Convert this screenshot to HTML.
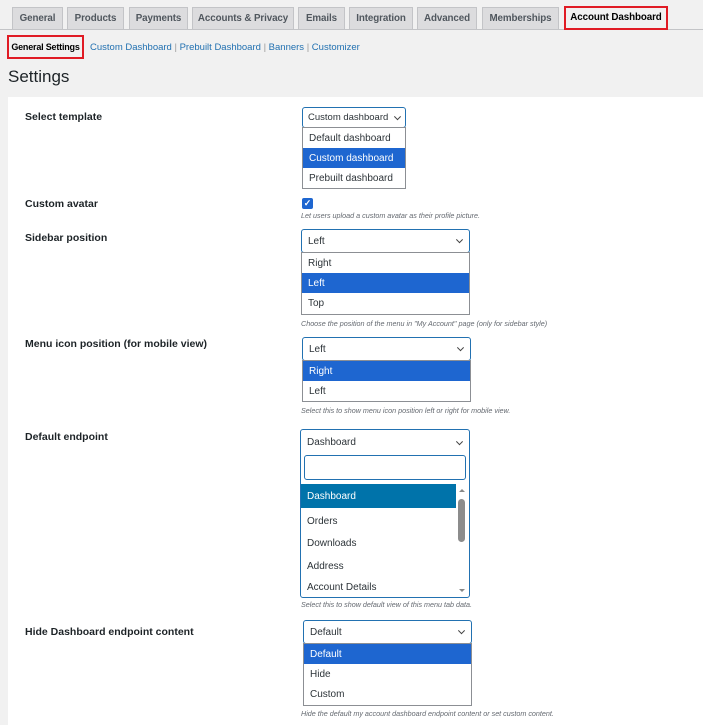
<!DOCTYPE html>
<html><head><style>
body{margin:0;width:703px;height:725px;background:#f1f1f1;font-family:"Liberation Sans",Arial,sans-serif;position:relative;overflow:hidden;color:#1d2327}
.a{position:absolute}
.tab{position:absolute;top:7px;height:22px;background:#dcdcde;border:1px solid #c3c4c7;border-bottom:none;font-size:9.8px;font-weight:bold;color:#50575e;text-align:center;line-height:22px;box-sizing:border-box;white-space:nowrap;letter-spacing:-0.1px}
.lbl{position:absolute;left:25px;font-size:10.5px;font-weight:bold;color:#1d2327}
.sel{position:absolute;background:#fff;border:1px solid #2271b1;border-radius:3px;box-sizing:border-box;font-size:10px;color:#2c3338;padding-left:6px}
.list{position:absolute;background:#fff;border:1px solid #8c8f94;box-sizing:border-box;font-size:10px;color:#2c3338}
.list div{height:20px;line-height:21px;padding-left:6px}
.list .on{background:#1e66d0;color:#fff}
.desc{position:absolute;left:301px;font-size:7.2px;font-style:italic;color:#646970;white-space:nowrap}
.chev{position:absolute;right:7px;top:50%;width:4px;height:4px;border-right:1.3px solid #444;border-bottom:1.3px solid #444;transform:translateY(-75%) rotate(45deg)}
</style></head><body>
<div class="a" style="left:0;top:29px;width:703px;height:1px;background:#c3c4c7"></div>
<div class="tab" style="left:12px;width:51px">General</div>
<div class="tab" style="left:67px;width:57px">Products</div>
<div class="tab" style="left:129px;width:59px">Payments</div>
<div class="tab" style="left:192px;width:102px">Accounts &amp; Privacy</div>
<div class="tab" style="left:298px;width:47px">Emails</div>
<div class="tab" style="left:349px;width:64px">Integration</div>
<div class="tab" style="left:417px;width:60px">Advanced</div>
<div class="tab" style="left:482px;width:77px">Memberships</div>
<div class="tab" style="left:564px;top:6px;height:24px;width:104px;background:#f1f1f1;color:#000;border:2px solid #e01b24;line-height:20px">Account Dashboard</div>
<div class="a" style="left:7px;top:35px;width:77px;height:24px;border:2px solid #e01b24;box-sizing:border-box;font-size:9px;font-weight:bold;line-height:20px;text-align:center;color:#000;white-space:nowrap;letter-spacing:-0.2px">General Settings</div>
<div class="a" style="left:90px;top:42px;font-size:9.5px;color:#2271b1">Custom Dashboard <span style="color:#999">|</span> Prebuilt Dashboard <span style="color:#999">|</span> Banners <span style="color:#999">|</span> Customizer</div>
<div class="a" style="left:8px;top:67px;font-size:17px;color:#1d2327">Settings</div>
<div class="a" style="left:8px;top:97px;width:695px;height:628px;background:#fff"></div>

<div class="lbl" style="top:111px">Select template</div>
<div class="sel" style="left:302px;top:107px;width:104px;height:21px;line-height:20px;white-space:nowrap;font-size:9.5px;padding-left:5px">Custom dashboard<span class="chev" style="right:5px"></span></div>
<div class="list" style="left:302px;top:127px;width:104px;height:62px"><div>Default dashboard</div><div class="on">Custom dashboard</div><div>Prebuilt dashboard</div></div>

<div class="lbl" style="top:198px">Custom avatar</div>
<div class="a" style="left:302px;top:198px;width:11px;height:11px;background:#1e66d0;border-radius:2px;color:#fff;font-size:9px;line-height:11px;text-align:center;font-weight:bold">✓</div>
<div class="desc" style="top:211px">Let users upload a custom avatar as their profile picture.</div>

<div class="lbl" style="top:232px">Sidebar position</div>
<div class="sel" style="left:301px;top:229px;width:169px;height:24px;line-height:23px">Left<span class="chev"></span></div>
<div class="list" style="left:301px;top:252px;width:169px;height:63px"><div>Right</div><div class="on">Left</div><div>Top</div></div>
<div class="desc" style="top:319px">Choose the position of the menu in "My Account" page (only for sidebar style)</div>

<div class="lbl" style="top:338px">Menu icon position (for mobile view)</div>
<div class="sel" style="left:302px;top:337px;width:169px;height:24px;line-height:23px">Left<span class="chev"></span></div>
<div class="list" style="left:302px;top:360px;width:169px;height:42px"><div class="on">Right</div><div>Left</div></div>
<div class="desc" style="top:406px">Select this to show menu icon position left or right for mobile view.</div>

<div class="lbl" style="top:431px">Default endpoint</div>
<div class="sel" style="left:300px;top:429px;width:170px;height:169px;line-height:26px">Dashboard<span class="chev" style="top:13px"></span>
<div class="a" style="left:3px;top:25px;width:162px;height:25px;border:1px solid #2271b1;border-radius:3px;box-sizing:border-box"></div>
<div class="a" style="left:0;top:54px;width:155px;height:24px;background:#0073aa;color:#fff;line-height:25px;padding-left:6px;box-sizing:border-box">Dashboard</div>
<div class="a" style="left:6px;top:85px;line-height:14px">Orders</div>
<div class="a" style="left:6px;top:107px;line-height:14px">Downloads</div>
<div class="a" style="left:6px;top:130px;line-height:14px">Address</div>
<div class="a" style="left:6px;top:151px;line-height:14px">Account Details</div>
<div class="a" style="left:158px;top:59px;border-left:3px solid transparent;border-right:3px solid transparent;border-bottom:3px solid #888"></div>
<div class="a" style="left:157px;top:69px;width:7px;height:43px;background:#8c8c8c;border-radius:4px"></div>
<div class="a" style="left:158px;top:159px;border-left:3px solid transparent;border-right:3px solid transparent;border-top:3px solid #888"></div>
</div>
<div class="desc" style="top:600px">Select this to show default view of this menu tab data.</div>

<div class="lbl" style="top:626px">Hide Dashboard endpoint content</div>
<div class="sel" style="left:303px;top:620px;width:169px;height:24px;line-height:23px">Default<span class="chev"></span></div>
<div class="list" style="left:303px;top:643px;width:169px;height:63px"><div class="on">Default</div><div>Hide</div><div>Custom</div></div>
<div class="desc" style="top:709px">Hide the default my account dashboard endpoint content or set custom content.</div>
</body></html>
